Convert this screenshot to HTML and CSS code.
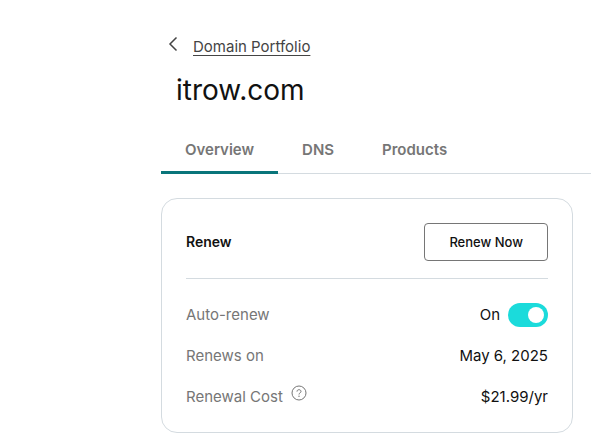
FILE: index.html
```html
<!DOCTYPE html>
<html lang="en">
<head>
<meta charset="utf-8">
<meta name="viewport" content="width=device-width, initial-scale=1">
<title>itrow.com</title>
<link rel="stylesheet" href="styles.css">
</head>
<body>
<main class="page">
  <header class="heading">
    <a class="back" href="#">
      <svg class="back-icon" viewBox="0 0 10 16" aria-hidden="true"><path d="M8.500 1.500 2 8l6.500 6.500"/></svg>
      <span class="back-text">Domain Portfolio</span>
    </a>
    <h1 class="title">itrow.com</h1>
  </header>
  <nav class="tabs">
    <a class="tab tab-active" href="#">Overview</a>
    <a class="tab" href="#">DNS</a>
    <a class="tab" href="#">Products</a>
  </nav>
  <section class="card">
    <div class="card-head">
      <h2 class="card-title">Renew</h2>
      <button class="renew" type="button">Renew Now</button>
    </div>
    <div class="row">
      <label class="label" for="auto">Auto-renew</label>
      <span class="value">On <input class="switch" id="auto" type="checkbox" role="switch" checked></span>
    </div>
    <div class="row">
      <span class="label">Renews on</span>
      <span class="value">May 6, 2025</span>
    </div>
    <div class="row">
      <span class="label">Renewal Cost
        <svg class="help" viewBox="0 0 16 16" aria-hidden="true"><circle cx="8" cy="8" r="7"/><path d="M6 6.600C6 5.300 6.900 4.700 8 4.700s2 .7 2 1.800C10 7.900 8 7.800 8 9.500"/><circle class="dot" cx="8" cy="11.300" r=".7"/></svg>
      </span>
      <span class="value">$21.99/yr</span>
    </div>
  </section>
</main>
</body>
</html>
```
FILE: styles.css
```css
* {
  box-sizing: border-box;
}

body {
  margin: 0;
  background: #fff;
  color: #111;
  font: 15px/24px Inter, "Liberation Sans", sans-serif;
}

.page {
  padding: 32px 0 6px 161px;
}

.heading {
  padding-left: 7px;
}

.back {
  display: flex;
  gap: 15px;
  width: fit-content;
  color: #444;
  text-decoration: none;
}

.back-icon {
  width: 10px;
  height: 16px;
  margin-top: 4px;
  fill: none;
  stroke: #444;
  stroke-width: 1.5;
}

.back-text {
  padding-top: 3px;
  text-decoration: underline;
  text-underline-offset: 3px;
}

.title {
  margin: 13px 0 0 8px;
  font-size: 28px;
  line-height: 36px;
  font-weight: 400;
}

.tabs {
  display: flex;
  margin-top: 18px;
  border-bottom: 1px solid #d4dbe0;
}

.tab {
  margin-bottom: -1px;
  padding: 12px 24px 9px;
  border-bottom: 3px solid transparent;
  color: #767676;
  font-weight: 600;
  line-height: 24px;
  text-decoration: none;
}

.tab-active {
  border-bottom-color: #09757a;
  border-radius: 2px 2px 0 0;
}

.card {
  margin: 24px 18px 0 0;
  padding: 24px 24px 15px;
  border: 1px solid #d4dbe0;
  border-radius: 16px;
}

.card-head {
  display: flex;
  align-items: center;
  justify-content: space-between;
  margin-bottom: 15px;
  padding-bottom: 17px;
  border-bottom: 1px solid #d4dbe0;
}

.card-title {
  margin: 0;
  font-size: 14px;
  font-weight: 600;
}

.renew {
  height: 38px;
  padding: 0 24px;
  border: 1px solid #767676;
  border-radius: 4px;
  background: #fff;
  color: #111;
  font: 500 13px/20px Inter, "Liberation Sans", sans-serif;
}

.row {
  display: flex;
  align-items: center;
  justify-content: space-between;
  min-height: 41px;
}

.label {
  display: flex;
  gap: 8px;
  color: #767676;
}

.value {
  display: flex;
  align-items: center;
  gap: 8px;
}

.help {
  width: 16px;
  height: 16px;
  fill: none;
  stroke: #767676;
}

.help .dot {
  fill: #767676;
  stroke: none;
}

.switch {
  display: flex;
  align-items: center;
  justify-content: flex-end;
  appearance: none;
  width: 40px;
  height: 24px;
  margin: 0;
  padding: 4px;
  border-radius: 12px;
  background: #1bdbdb;
}

.switch::before {
  content: "";
  width: 16px;
  height: 16px;
  border-radius: 50%;
  background: #fff;
}
```
